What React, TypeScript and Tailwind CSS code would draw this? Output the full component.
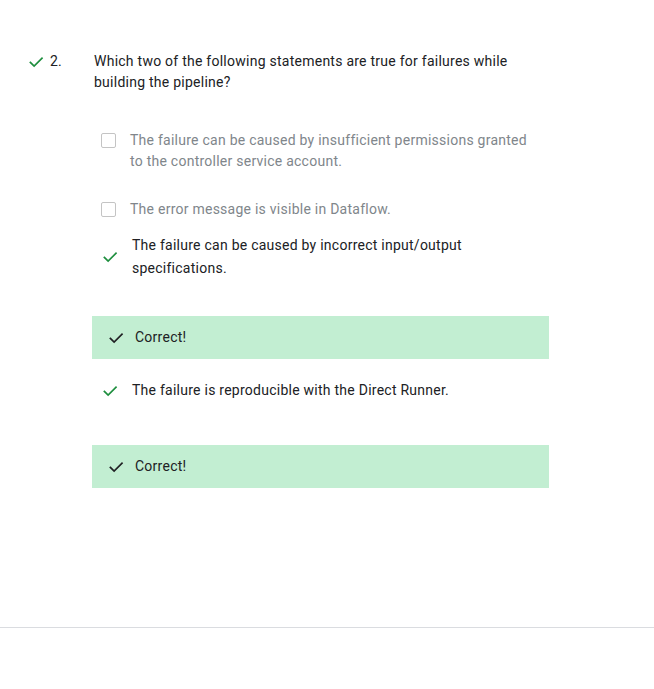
import React from 'react';

const font = { fontFamily: 'Roboto, "Liberation Sans", sans-serif' };

const Check: React.FC<{ className?: string }> = ({ className }) => (
  <svg viewBox="0 0 24 24" className={className} fill="none" stroke="currentColor" strokeWidth={2.2} strokeLinecap="square">
    <path d="M4.5 12.5l5 5L20 7" />
  </svg>
);

const Box: React.FC = () => (
  <span className="mt-[3px] block h-[15px] w-[15px] shrink-0 rounded-[2px] border border-[#c4c4c4] bg-white" />
);

const Correct: React.FC = () => (
  <div className="flex h-[43px] w-[457px] items-center bg-[#c2eed2] pl-[15px] text-[14px] tracking-[0.25px] text-[#202124]">
    <Check className="h-[18px] w-[18px] text-[#202124]" />
    <span className="ml-[10px]">Correct!</span>
  </div>
);

export default function App() {
  return (
    <div className="min-h-[689px] bg-white" style={font}>
      <div className="h-[627px] pl-[27px] pt-[51px]">
        <div className="flex text-[14px] leading-[21px] tracking-[0.25px] text-[#202124]">
          <div className="flex w-[67px] shrink-0 items-start">
            <Check className="mt-[2px] h-[18px] w-[18px] text-[#1e8e3e]" />
            <span className="ml-[5px]">2.</span>
          </div>
          <p className="w-[455px]">
            Which two of the following statements are true for failures while building the pipeline?
          </p>
        </div>

        <div className="ml-[65px] mt-[37px] w-[457px] tracking-[0.25px]">
          <div className="flex pl-[9px] text-[14px] leading-[21px] text-[#80868b]">
            <Box />
            <p className="ml-[14px] w-[400px]">
              The failure can be caused by insufficient permissions granted to the controller service account.
            </p>
          </div>

          <div className="mt-[27px] flex pl-[9px] text-[14px] leading-[21px] text-[#80868b]">
            <Box />
            <p className="ml-[14px] w-[400px]">The error message is visible in Dataflow.</p>
          </div>

          <div className="mt-[14px] flex items-center pl-[9px] text-[14px] leading-[23px] text-[#202124]">
            <Check className="h-[18px] w-[18px] shrink-0 text-[#1e8e3e]" />
            <p className="ml-[13px] w-[400px]">
              The failure can be caused by incorrect input/output specifications.
            </p>
          </div>

          <div className="mt-[36px]">
            <Correct />
          </div>

          <div className="mt-[21px] flex items-center pl-[9px] text-[14px] leading-[21px] text-[#202124]">
            <Check className="h-[18px] w-[18px] shrink-0 text-[#1e8e3e]" />
            <p className="ml-[13px] w-[400px]">The failure is reproducible with the Direct Runner.</p>
          </div>

          <div className="mt-[44px]">
            <Correct />
          </div>
        </div>
      </div>
      <div className="h-px w-full bg-[#dadce0]" />
    </div>
  );
}
